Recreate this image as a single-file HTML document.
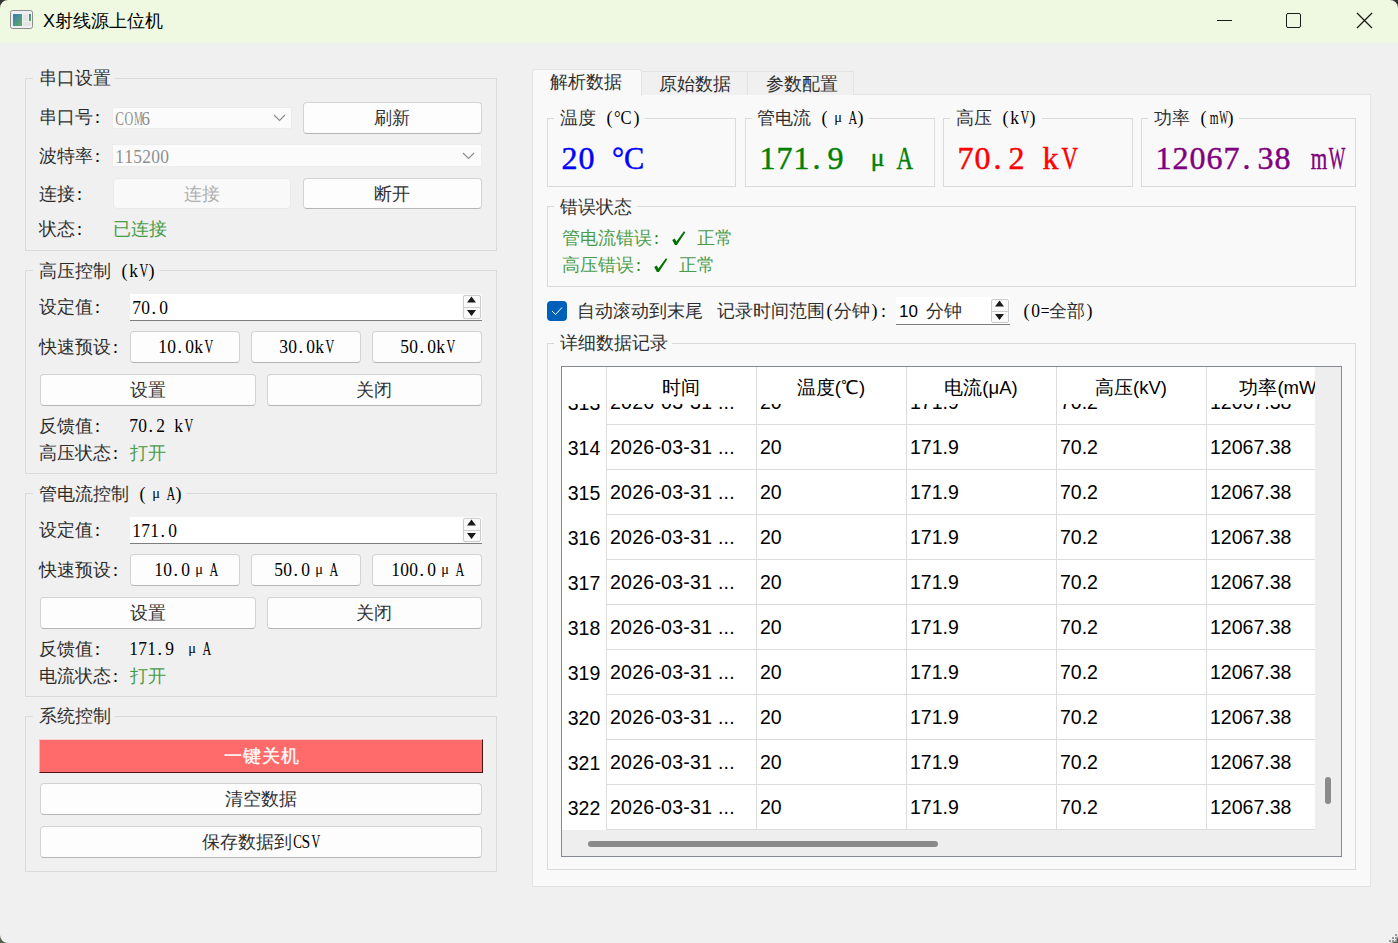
<!DOCTYPE html><html><head><meta charset="utf-8"><style>
*{margin:0;padding:0}
html,body{width:1398px;height:943px;overflow:hidden;background:#f0f0f0;position:relative}
.abs{position:absolute}
.s{font-family:"Liberation Serif",serif;font-size:18px;line-height:18px;color:#000;white-space:nowrap}
.s i{display:inline-block;text-align:center;font-style:normal}
.s i.c{opacity:.82}
.w i.c{opacity:1}
.u{font-family:"Liberation Sans",sans-serif;font-size:19.5px;line-height:20px;color:#000;white-space:nowrap}
.btn{box-sizing:border-box;border:1px solid #d3d3d3;border-bottom-color:#b5b5b5;border-radius:4px;background:#fdfdfd}
.g{color:#1f8a1f}
</style></head><body>
<div class="abs" style="left:0px;top:0px;width:1398px;height:43px;background:#eff8e0;"></div>
<svg class="abs" style="left:10px;top:10px" width="23" height="19" viewBox="0 0 23 19"><rect x="0.5" y="0.5" width="22" height="18" rx="2" fill="#eef0f4" stroke="#8c8c8c"/><defs><linearGradient id="ig" x1="0" y1="0" x2="1" y2="1"><stop offset="0" stop-color="#3b79b8"/><stop offset="1" stop-color="#5fb05a"/></linearGradient></defs><rect x="3" y="4" width="9" height="12" fill="url(#ig)"/><rect x="19" y="4" width="2" height="7" fill="url(#ig)"/><rect x="13" y="4" width="5" height="7" fill="#e4e4e4"/><rect x="13" y="12" width="8" height="4" fill="#e4e4e4"/></svg>
<div class="abs u" style="left:43px;top:12px;font-size:18px;line-height:18px">X射线源上位机</div>
<div class="abs" style="left:1217px;top:20px;width:15px;height:1px;background:#1a1a1a;"></div>
<div class="abs" style="left:1286px;top:13px;width:15px;height:15px;border:1.3px solid #1a1a1a;border-radius:2px;box-sizing:border-box;"></div>
<svg class="abs" style="left:1356px;top:12px" width="17" height="17"><path d="M1 1L16 16M16 1L1 16" stroke="#1a1a1a" stroke-width="1.3"/></svg>
<svg class="abs" style="left:0;top:0" width="8" height="8"><path d="M0 0H8A8 8 0 0 0 0 8Z" fill="#333"/></svg>
<svg class="abs" style="left:1390px;top:0" width="8" height="8"><path d="M8 0H0A8 8 0 0 1 8 8Z" fill="#333"/></svg>
<svg class="abs" style="left:0;top:935px" width="8" height="8"><path d="M0 8H8A8 8 0 0 1 0 0Z" fill="#566050"/></svg>
<svg class="abs" style="left:1390px;top:935px" width="8" height="8"><path d="M8 8H0A8 8 0 0 0 8 0Z" fill="#566050"/></svg>
<div class="abs" style="left:25px;top:78px;width:472px;height:173px;border:1px solid #dadada;box-sizing:border-box;"></div>
<div class="abs" style="left:33px;top:76px;width:81px;height:5px;background:#f0f0f0;"></div>
<div class="abs s" style="left:39px;top:69px;"><i class="c" style="width:18px">串</i><i class="c" style="width:18px">口</i><i class="c" style="width:18px">设</i><i class="c" style="width:18px">置</i></div>
<div class="abs s" style="left:39px;top:108px;"><i class="c" style="width:18px">串</i><i class="c" style="width:18px">口</i><i class="c" style="width:18px">号</i><i style="width:9.0px">:</i></div>
<div class="abs" style="left:112px;top:107px;width:180px;height:22px;background:#fbfbfb;border:1px solid #ececec;box-sizing:border-box;"></div>
<div class="abs s" style="left:114px;top:110px;color:#8f8f8f"><i style="width:9.0px"><b style="display:inline-block;font-weight:inherit;width:9.0px;transform:scaleX(0.727)">C</b></i><i style="width:9.0px"><b style="display:inline-block;font-weight:inherit;width:9.0px;transform:scaleX(0.672)">O</b></i><i style="width:9.0px"><b style="display:inline-block;font-weight:inherit;width:9.0px;transform:scaleX(0.545)">M</b></i><i style="width:9.0px"><b style="display:inline-block;font-weight:inherit;width:9.0px;transform:scaleX(0.970)">6</b></i></div>
<svg class="abs" style="left:273px;top:114px" width="13" height="8"><path d="M1 1L6.5 6.5L12 1" fill="none" stroke="#8a8a8a" stroke-width="1.1"/></svg>
<div class="abs btn" style="left:303px;top:102px;width:179px;height:32px;"></div>
<div class="abs s" style="left:374px;top:109px;"><i class="c" style="width:18px">刷</i><i class="c" style="width:18px">新</i></div>
<div class="abs s" style="left:39px;top:147px;"><i class="c" style="width:18px">波</i><i class="c" style="width:18px">特</i><i class="c" style="width:18px">率</i><i style="width:9.0px">:</i></div>
<div class="abs" style="left:112px;top:144px;width:370px;height:23px;background:#fbfbfb;border:1px solid #ececec;box-sizing:border-box;"></div>
<div class="abs s" style="left:115px;top:148px;color:#8f8f8f"><i style="width:9.0px"><b style="display:inline-block;font-weight:inherit;width:9.0px;transform:scaleX(0.970)">1</b></i><i style="width:9.0px"><b style="display:inline-block;font-weight:inherit;width:9.0px;transform:scaleX(0.970)">1</b></i><i style="width:9.0px"><b style="display:inline-block;font-weight:inherit;width:9.0px;transform:scaleX(0.970)">5</b></i><i style="width:9.0px"><b style="display:inline-block;font-weight:inherit;width:9.0px;transform:scaleX(0.970)">2</b></i><i style="width:9.0px"><b style="display:inline-block;font-weight:inherit;width:9.0px;transform:scaleX(0.970)">0</b></i><i style="width:9.0px"><b style="display:inline-block;font-weight:inherit;width:9.0px;transform:scaleX(0.970)">0</b></i></div>
<svg class="abs" style="left:462px;top:152px" width="13" height="8"><path d="M1 1L6.5 6.5L12 1" fill="none" stroke="#8a8a8a" stroke-width="1.1"/></svg>
<div class="abs s" style="left:39px;top:185px;"><i class="c" style="width:18px">连</i><i class="c" style="width:18px">接</i><i style="width:9.0px">:</i></div>
<div class="abs btn" style="left:113px;top:178px;width:178px;height:31px;background:#f9f9f9;border-color:#eaeaea;color:#a0a0a0;"></div>
<div class="abs s" style="left:184px;top:185px;color:#a0a0a0"><i class="c" style="width:18px">连</i><i class="c" style="width:18px">接</i></div>
<div class="abs btn" style="left:303px;top:178px;width:179px;height:31px;"></div>
<div class="abs s" style="left:374px;top:185px;"><i class="c" style="width:18px">断</i><i class="c" style="width:18px">开</i></div>
<div class="abs s" style="left:39px;top:220px;"><i class="c" style="width:18px">状</i><i class="c" style="width:18px">态</i><i style="width:9.0px">:</i></div>
<div class="abs s g" style="left:113px;top:220px;"><i class="c" style="width:18px">已</i><i class="c" style="width:18px">连</i><i class="c" style="width:18px">接</i></div>
<div class="abs" style="left:25px;top:270px;width:472px;height:204px;border:1px solid #dadada;box-sizing:border-box;"></div>
<div class="abs" style="left:33px;top:268px;width:126px;height:5px;background:#f0f0f0;"></div>
<div class="abs s" style="left:39px;top:262px;"><i class="c" style="width:18px">高</i><i class="c" style="width:18px">压</i><i class="c" style="width:18px">控</i><i class="c" style="width:18px">制</i><i style="width:9.0px"></i><i style="width:9.0px">(</i><i style="width:9.0px"><b style="display:inline-block;font-weight:inherit;width:9.0px;transform:scaleX(0.970)">k</b></i><i style="width:9.0px"><b style="display:inline-block;font-weight:inherit;width:9.0px;transform:scaleX(0.672)">V</b></i><i style="width:9.0px">)</i></div>
<div class="abs s" style="left:39px;top:298px;"><i class="c" style="width:18px">设</i><i class="c" style="width:18px">定</i><i class="c" style="width:18px">值</i><i style="width:9.0px">:</i></div>
<div class="abs" style="left:130px;top:294px;width:352px;height:27px;background:#fff;border-bottom:1px solid #7d7d7d;box-sizing:border-box;"></div>
<div class="abs" style="left:462px;top:294px;width:20px;height:26px;background:#f9f9f9;"></div>
<div class="abs" style="left:463px;top:295px;width:18px;height:24px;border:1px solid #cdcdcd;border-radius:2px;box-sizing:border-box;background:#fafafa;"></div>
<div class="abs" style="left:463px;top:307px;width:18px;height:1px;background:#cdcdcd;"></div>
<svg class="abs" style="left:466px;top:296px" width="11" height="20"><path d="M1 6.5L5.5 0.5L10 6.5Z M1 14L5.5 20L10 14Z" fill="#1a1a1a"/></svg>
<div class="abs s" style="left:132px;top:299px;"><i style="width:9.0px"><b style="display:inline-block;font-weight:inherit;width:9.0px;transform:scaleX(0.970)">7</b></i><i style="width:9.0px"><b style="display:inline-block;font-weight:inherit;width:9.0px;transform:scaleX(0.970)">0</b></i><i style="width:9.0px;text-align:left;text-indent:1.4px">.</i><i style="width:9.0px"><b style="display:inline-block;font-weight:inherit;width:9.0px;transform:scaleX(0.970)">0</b></i></div>
<div class="abs s" style="left:39px;top:338px;"><i class="c" style="width:18px">快</i><i class="c" style="width:18px">速</i><i class="c" style="width:18px">预</i><i class="c" style="width:18px">设</i><i style="width:9.0px">:</i></div>
<div class="abs btn" style="left:130px;top:331px;width:110px;height:32px;"></div>
<div class="abs s" style="left:158px;top:338px;"><i style="width:9.0px"><b style="display:inline-block;font-weight:inherit;width:9.0px;transform:scaleX(0.970)">1</b></i><i style="width:9.0px"><b style="display:inline-block;font-weight:inherit;width:9.0px;transform:scaleX(0.970)">0</b></i><i style="width:9.0px;text-align:left;text-indent:1.4px">.</i><i style="width:9.0px"><b style="display:inline-block;font-weight:inherit;width:9.0px;transform:scaleX(0.970)">0</b></i><i style="width:9.0px"><b style="display:inline-block;font-weight:inherit;width:9.0px;transform:scaleX(0.970)">k</b></i><i style="width:9.0px"><b style="display:inline-block;font-weight:inherit;width:9.0px;transform:scaleX(0.672)">V</b></i></div>
<div class="abs btn" style="left:251px;top:331px;width:110px;height:32px;"></div>
<div class="abs s" style="left:279px;top:338px;"><i style="width:9.0px"><b style="display:inline-block;font-weight:inherit;width:9.0px;transform:scaleX(0.970)">3</b></i><i style="width:9.0px"><b style="display:inline-block;font-weight:inherit;width:9.0px;transform:scaleX(0.970)">0</b></i><i style="width:9.0px;text-align:left;text-indent:1.4px">.</i><i style="width:9.0px"><b style="display:inline-block;font-weight:inherit;width:9.0px;transform:scaleX(0.970)">0</b></i><i style="width:9.0px"><b style="display:inline-block;font-weight:inherit;width:9.0px;transform:scaleX(0.970)">k</b></i><i style="width:9.0px"><b style="display:inline-block;font-weight:inherit;width:9.0px;transform:scaleX(0.672)">V</b></i></div>
<div class="abs btn" style="left:372px;top:331px;width:110px;height:32px;"></div>
<div class="abs s" style="left:400px;top:338px;"><i style="width:9.0px"><b style="display:inline-block;font-weight:inherit;width:9.0px;transform:scaleX(0.970)">5</b></i><i style="width:9.0px"><b style="display:inline-block;font-weight:inherit;width:9.0px;transform:scaleX(0.970)">0</b></i><i style="width:9.0px;text-align:left;text-indent:1.4px">.</i><i style="width:9.0px"><b style="display:inline-block;font-weight:inherit;width:9.0px;transform:scaleX(0.970)">0</b></i><i style="width:9.0px"><b style="display:inline-block;font-weight:inherit;width:9.0px;transform:scaleX(0.970)">k</b></i><i style="width:9.0px"><b style="display:inline-block;font-weight:inherit;width:9.0px;transform:scaleX(0.672)">V</b></i></div>
<div class="abs btn" style="left:40px;top:374px;width:216px;height:32px;"></div>
<div class="abs s" style="left:130px;top:381px;"><i class="c" style="width:18px">设</i><i class="c" style="width:18px">置</i></div>
<div class="abs btn" style="left:267px;top:374px;width:215px;height:32px;"></div>
<div class="abs s" style="left:356px;top:381px;"><i class="c" style="width:18px">关</i><i class="c" style="width:18px">闭</i></div>
<div class="abs s" style="left:39px;top:417px;"><i class="c" style="width:18px">反</i><i class="c" style="width:18px">馈</i><i class="c" style="width:18px">值</i><i style="width:9.0px">:</i></div>
<div class="abs s" style="left:129px;top:417px;"><i style="width:9.0px"><b style="display:inline-block;font-weight:inherit;width:9.0px;transform:scaleX(0.970)">7</b></i><i style="width:9.0px"><b style="display:inline-block;font-weight:inherit;width:9.0px;transform:scaleX(0.970)">0</b></i><i style="width:9.0px;text-align:left;text-indent:1.4px">.</i><i style="width:9.0px"><b style="display:inline-block;font-weight:inherit;width:9.0px;transform:scaleX(0.970)">2</b></i><i style="width:9.0px"></i><i style="width:9.0px"><b style="display:inline-block;font-weight:inherit;width:9.0px;transform:scaleX(0.970)">k</b></i><i style="width:9.0px"><b style="display:inline-block;font-weight:inherit;width:9.0px;transform:scaleX(0.672)">V</b></i></div>
<div class="abs s" style="left:39px;top:444px;"><i class="c" style="width:18px">高</i><i class="c" style="width:18px">压</i><i class="c" style="width:18px">状</i><i class="c" style="width:18px">态</i><i style="width:9.0px">:</i></div>
<div class="abs s g" style="left:130px;top:444px;"><i class="c" style="width:18px">打</i><i class="c" style="width:18px">开</i></div>
<div class="abs" style="left:25px;top:493px;width:472px;height:204px;border:1px solid #dadada;box-sizing:border-box;"></div>
<div class="abs" style="left:33px;top:491px;width:153px;height:5px;background:#f0f0f0;"></div>
<div class="abs s" style="left:39px;top:485px;"><i class="c" style="width:18px">管</i><i class="c" style="width:18px">电</i><i class="c" style="width:18px">流</i><i class="c" style="width:18px">控</i><i class="c" style="width:18px">制</i><i style="width:9.0px"></i><i style="width:9.0px">(</i><i style="width:18px"><b style="display:inline-block;font-weight:normal;font-size:0.8em;transform:translateY(-0.12em)">μ</b></i><i style="width:9.0px"><b style="display:inline-block;font-weight:inherit;width:9.0px;transform:scaleX(0.672)">A</b></i><i style="width:9.0px">)</i></div>
<div class="abs s" style="left:39px;top:521px;"><i class="c" style="width:18px">设</i><i class="c" style="width:18px">定</i><i class="c" style="width:18px">值</i><i style="width:9.0px">:</i></div>
<div class="abs" style="left:130px;top:517px;width:352px;height:27px;background:#fff;border-bottom:1px solid #7d7d7d;box-sizing:border-box;"></div>
<div class="abs" style="left:462px;top:517px;width:20px;height:26px;background:#f9f9f9;"></div>
<div class="abs" style="left:463px;top:518px;width:18px;height:24px;border:1px solid #cdcdcd;border-radius:2px;box-sizing:border-box;background:#fafafa;"></div>
<div class="abs" style="left:463px;top:530px;width:18px;height:1px;background:#cdcdcd;"></div>
<svg class="abs" style="left:466px;top:519px" width="11" height="20"><path d="M1 6.5L5.5 0.5L10 6.5Z M1 14L5.5 20L10 14Z" fill="#1a1a1a"/></svg>
<div class="abs s" style="left:132px;top:522px;"><i style="width:9.0px"><b style="display:inline-block;font-weight:inherit;width:9.0px;transform:scaleX(0.970)">1</b></i><i style="width:9.0px"><b style="display:inline-block;font-weight:inherit;width:9.0px;transform:scaleX(0.970)">7</b></i><i style="width:9.0px"><b style="display:inline-block;font-weight:inherit;width:9.0px;transform:scaleX(0.970)">1</b></i><i style="width:9.0px;text-align:left;text-indent:1.4px">.</i><i style="width:9.0px"><b style="display:inline-block;font-weight:inherit;width:9.0px;transform:scaleX(0.970)">0</b></i></div>
<div class="abs s" style="left:39px;top:561px;"><i class="c" style="width:18px">快</i><i class="c" style="width:18px">速</i><i class="c" style="width:18px">预</i><i class="c" style="width:18px">设</i><i style="width:9.0px">:</i></div>
<div class="abs btn" style="left:130px;top:554px;width:110px;height:32px;"></div>
<div class="abs s" style="left:154px;top:561px;"><i style="width:9.0px"><b style="display:inline-block;font-weight:inherit;width:9.0px;transform:scaleX(0.970)">1</b></i><i style="width:9.0px"><b style="display:inline-block;font-weight:inherit;width:9.0px;transform:scaleX(0.970)">0</b></i><i style="width:9.0px;text-align:left;text-indent:1.4px">.</i><i style="width:9.0px"><b style="display:inline-block;font-weight:inherit;width:9.0px;transform:scaleX(0.970)">0</b></i><i style="width:18px"><b style="display:inline-block;font-weight:normal;font-size:0.8em;transform:translateY(-0.12em)">μ</b></i><i style="width:9.0px"><b style="display:inline-block;font-weight:inherit;width:9.0px;transform:scaleX(0.672)">A</b></i></div>
<div class="abs btn" style="left:251px;top:554px;width:110px;height:32px;"></div>
<div class="abs s" style="left:274px;top:561px;"><i style="width:9.0px"><b style="display:inline-block;font-weight:inherit;width:9.0px;transform:scaleX(0.970)">5</b></i><i style="width:9.0px"><b style="display:inline-block;font-weight:inherit;width:9.0px;transform:scaleX(0.970)">0</b></i><i style="width:9.0px;text-align:left;text-indent:1.4px">.</i><i style="width:9.0px"><b style="display:inline-block;font-weight:inherit;width:9.0px;transform:scaleX(0.970)">0</b></i><i style="width:18px"><b style="display:inline-block;font-weight:normal;font-size:0.8em;transform:translateY(-0.12em)">μ</b></i><i style="width:9.0px"><b style="display:inline-block;font-weight:inherit;width:9.0px;transform:scaleX(0.672)">A</b></i></div>
<div class="abs btn" style="left:372px;top:554px;width:110px;height:32px;"></div>
<div class="abs s" style="left:391px;top:561px;"><i style="width:9.0px"><b style="display:inline-block;font-weight:inherit;width:9.0px;transform:scaleX(0.970)">1</b></i><i style="width:9.0px"><b style="display:inline-block;font-weight:inherit;width:9.0px;transform:scaleX(0.970)">0</b></i><i style="width:9.0px"><b style="display:inline-block;font-weight:inherit;width:9.0px;transform:scaleX(0.970)">0</b></i><i style="width:9.0px;text-align:left;text-indent:1.4px">.</i><i style="width:9.0px"><b style="display:inline-block;font-weight:inherit;width:9.0px;transform:scaleX(0.970)">0</b></i><i style="width:18px"><b style="display:inline-block;font-weight:normal;font-size:0.8em;transform:translateY(-0.12em)">μ</b></i><i style="width:9.0px"><b style="display:inline-block;font-weight:inherit;width:9.0px;transform:scaleX(0.672)">A</b></i></div>
<div class="abs btn" style="left:40px;top:597px;width:216px;height:32px;"></div>
<div class="abs s" style="left:130px;top:604px;"><i class="c" style="width:18px">设</i><i class="c" style="width:18px">置</i></div>
<div class="abs btn" style="left:267px;top:597px;width:215px;height:32px;"></div>
<div class="abs s" style="left:356px;top:604px;"><i class="c" style="width:18px">关</i><i class="c" style="width:18px">闭</i></div>
<div class="abs s" style="left:39px;top:640px;"><i class="c" style="width:18px">反</i><i class="c" style="width:18px">馈</i><i class="c" style="width:18px">值</i><i style="width:9.0px">:</i></div>
<div class="abs s" style="left:129px;top:640px;"><i style="width:9.0px"><b style="display:inline-block;font-weight:inherit;width:9.0px;transform:scaleX(0.970)">1</b></i><i style="width:9.0px"><b style="display:inline-block;font-weight:inherit;width:9.0px;transform:scaleX(0.970)">7</b></i><i style="width:9.0px"><b style="display:inline-block;font-weight:inherit;width:9.0px;transform:scaleX(0.970)">1</b></i><i style="width:9.0px;text-align:left;text-indent:1.4px">.</i><i style="width:9.0px"><b style="display:inline-block;font-weight:inherit;width:9.0px;transform:scaleX(0.970)">9</b></i><i style="width:9.0px"></i><i style="width:18px"><b style="display:inline-block;font-weight:normal;font-size:0.8em;transform:translateY(-0.12em)">μ</b></i><i style="width:9.0px"><b style="display:inline-block;font-weight:inherit;width:9.0px;transform:scaleX(0.672)">A</b></i></div>
<div class="abs s" style="left:39px;top:667px;"><i class="c" style="width:18px">电</i><i class="c" style="width:18px">流</i><i class="c" style="width:18px">状</i><i class="c" style="width:18px">态</i><i style="width:9.0px">:</i></div>
<div class="abs s g" style="left:130px;top:667px;"><i class="c" style="width:18px">打</i><i class="c" style="width:18px">开</i></div>
<div class="abs" style="left:25px;top:716px;width:472px;height:156px;border:1px solid #dadada;box-sizing:border-box;"></div>
<div class="abs" style="left:33px;top:714px;width:81px;height:5px;background:#f0f0f0;"></div>
<div class="abs s" style="left:39px;top:707px;"><i class="c" style="width:18px">系</i><i class="c" style="width:18px">统</i><i class="c" style="width:18px">控</i><i class="c" style="width:18px">制</i></div>
<div class="abs" style="left:39px;top:739px;width:444px;height:34px;box-sizing:border-box;background:#ff6b6b;border-top:1px solid #ffd0d0;border-left:1px solid #ffb0b0;border-right:1px solid #4a1515;border-bottom:1px solid #4a1515"></div>
<div class="abs s w" style="left:223px;top:747px;color:#fff;-webkit-text-stroke:0.3px #fff"><i class="c" style="width:19px">一</i><i class="c" style="width:19px">键</i><i class="c" style="width:19px">关</i><i class="c" style="width:19px">机</i></div>
<div class="abs btn" style="left:40px;top:783px;width:442px;height:32px;"></div>
<div class="abs s" style="left:225px;top:790px;"><i class="c" style="width:18px">清</i><i class="c" style="width:18px">空</i><i class="c" style="width:18px">数</i><i class="c" style="width:18px">据</i></div>
<div class="abs btn" style="left:40px;top:826px;width:442px;height:32px;"></div>
<div class="abs s" style="left:202px;top:833px;"><i class="c" style="width:18px">保</i><i class="c" style="width:18px">存</i><i class="c" style="width:18px">数</i><i class="c" style="width:18px">据</i><i class="c" style="width:18px">到</i><i style="width:9.0px"><b style="display:inline-block;font-weight:inherit;width:9.0px;transform:scaleX(0.727)">C</b></i><i style="width:9.0px"><b style="display:inline-block;font-weight:inherit;width:9.0px;transform:scaleX(0.872)">S</b></i><i style="width:9.0px"><b style="display:inline-block;font-weight:inherit;width:9.0px;transform:scaleX(0.672)">V</b></i></div>
<div class="abs" style="left:532px;top:94px;width:839px;height:793px;background:#f9f9f9;border:1px solid #e3e3e3;box-sizing:border-box;"></div>
<div class="abs" style="left:641px;top:71px;width:107px;height:24px;background:#f0f0f0;border:1px solid #e3e3e3;border-bottom:none;box-sizing:border-box;"></div>
<div class="abs" style="left:747px;top:71px;width:107px;height:24px;background:#f0f0f0;border:1px solid #e3e3e3;border-bottom:none;box-sizing:border-box;"></div>
<div class="abs" style="left:532px;top:69px;width:110px;height:27px;background:#f9f9f9;border:1px solid #e3e3e3;border-bottom:none;box-sizing:border-box;border-radius:3px 3px 0 0;"></div>
<div class="abs s" style="left:550px;top:73px;"><i class="c" style="width:18px">解</i><i class="c" style="width:18px">析</i><i class="c" style="width:18px">数</i><i class="c" style="width:18px">据</i></div>
<div class="abs s" style="left:659px;top:75px;"><i class="c" style="width:18px">原</i><i class="c" style="width:18px">始</i><i class="c" style="width:18px">数</i><i class="c" style="width:18px">据</i></div>
<div class="abs s" style="left:766px;top:75px;"><i class="c" style="width:18px">参</i><i class="c" style="width:18px">数</i><i class="c" style="width:18px">配</i><i class="c" style="width:18px">置</i></div>
<div class="abs" style="left:547px;top:118px;width:189px;height:69px;border:1px solid #dadada;box-sizing:border-box;"></div>
<div class="abs" style="left:554px;top:116px;width:91px;height:5px;background:#f9f9f9;"></div>
<div class="abs s" style="left:560px;top:109px;"><i class="c" style="width:18px">温</i><i class="c" style="width:18px">度</i><i style="width:9.0px"></i><i style="width:9.0px">(</i><i style="width:18px;text-align:left"><b style="display:inline-block;font-weight:inherit;transform:scaleX(0.919);transform-origin:0 0;white-space:nowrap">°C</b></i><i style="width:9.0px">)</i></div>
<div class="abs s" style="left:561px;top:142px;color:#0000ff;font-size:32px;line-height:32px;-webkit-text-stroke:0.45px #0000ff"><i style="width:17.0px">2</i><i style="width:17.0px">0</i><i style="width:17.0px"></i><i style="width:33px;text-align:left"><b style="display:inline-block;font-weight:inherit;transform:scaleX(0.947);transform-origin:0 0;white-space:nowrap">°C</b></i></div>
<div class="abs" style="left:745px;top:118px;width:190px;height:69px;border:1px solid #dadada;box-sizing:border-box;"></div>
<div class="abs" style="left:752px;top:116px;width:117px;height:5px;background:#f9f9f9;"></div>
<div class="abs s" style="left:757px;top:109px;"><i class="c" style="width:18px">管</i><i class="c" style="width:18px">电</i><i class="c" style="width:18px">流</i><i style="width:9.0px"></i><i style="width:9.0px">(</i><i style="width:18px"><b style="display:inline-block;font-weight:normal;font-size:0.8em;transform:translateY(-0.12em)">μ</b></i><i style="width:9.0px"><b style="display:inline-block;font-weight:inherit;width:9.0px;transform:scaleX(0.672)">A</b></i><i style="width:9.0px">)</i></div>
<div class="abs s" style="left:759px;top:142px;color:#008000;font-size:32px;line-height:32px;-webkit-text-stroke:0.45px #008000"><i style="width:17.0px">1</i><i style="width:17.0px">7</i><i style="width:17.0px">1</i><i style="width:17.0px;text-align:left;text-indent:2.6px">.</i><i style="width:17.0px">9</i><i style="width:17.0px"></i><i style="width:33px"><b style="display:inline-block;font-weight:normal;font-size:0.8em;transform:translateY(-0.12em)">μ</b></i><i style="width:17.0px"><b style="display:inline-block;font-weight:inherit;width:17.0px;transform:scaleX(0.714)">A</b></i></div>
<div class="abs" style="left:943px;top:118px;width:190px;height:69px;border:1px solid #dadada;box-sizing:border-box;"></div>
<div class="abs" style="left:950px;top:116px;width:92px;height:5px;background:#f9f9f9;"></div>
<div class="abs s" style="left:956px;top:109px;"><i class="c" style="width:18px">高</i><i class="c" style="width:18px">压</i><i style="width:9.0px"></i><i style="width:9.0px">(</i><i style="width:9.0px"><b style="display:inline-block;font-weight:inherit;width:9.0px;transform:scaleX(0.970)">k</b></i><i style="width:9.0px"><b style="display:inline-block;font-weight:inherit;width:9.0px;transform:scaleX(0.672)">V</b></i><i style="width:9.0px">)</i></div>
<div class="abs s" style="left:957px;top:142px;color:#ff0000;font-size:32px;line-height:32px;-webkit-text-stroke:0.45px #ff0000"><i style="width:17.0px">7</i><i style="width:17.0px">0</i><i style="width:17.0px;text-align:left;text-indent:2.6px">.</i><i style="width:17.0px">2</i><i style="width:17.0px"></i><i style="width:17.0px">k</i><i style="width:17.0px"><b style="display:inline-block;font-weight:inherit;width:17.0px;transform:scaleX(0.714)">V</b></i></div>
<div class="abs" style="left:1141px;top:118px;width:215px;height:69px;border:1px solid #dadada;box-sizing:border-box;"></div>
<div class="abs" style="left:1148px;top:116px;width:91px;height:5px;background:#f9f9f9;"></div>
<div class="abs s" style="left:1154px;top:109px;"><i class="c" style="width:18px">功</i><i class="c" style="width:18px">率</i><i style="width:9.0px"></i><i style="width:9.0px">(</i><i style="width:9.0px"><b style="display:inline-block;font-weight:inherit;width:9.0px;transform:scaleX(0.624)">m</b></i><i style="width:9.0px"><b style="display:inline-block;font-weight:inherit;width:9.0px;transform:scaleX(0.514)">W</b></i><i style="width:9.0px">)</i></div>
<div class="abs s" style="left:1155px;top:142px;color:#800080;font-size:32px;line-height:32px;-webkit-text-stroke:0.45px #800080"><i style="width:17.0px">1</i><i style="width:17.0px">2</i><i style="width:17.0px">0</i><i style="width:17.0px">6</i><i style="width:17.0px">7</i><i style="width:17.0px;text-align:left;text-indent:2.6px">.</i><i style="width:17.0px">3</i><i style="width:17.0px">8</i><i style="width:17.0px"></i><i style="width:17.0px"><b style="display:inline-block;font-weight:inherit;width:17.0px;transform:scaleX(0.662)">m</b></i><i style="width:17.0px"><b style="display:inline-block;font-weight:inherit;width:17.0px;transform:scaleX(0.546)">W</b></i></div>
<div class="abs" style="left:547px;top:206px;width:809px;height:81px;border:1px solid #dadada;box-sizing:border-box;"></div>
<div class="abs" style="left:554px;top:204px;width:83px;height:5px;background:#f9f9f9;"></div>
<div class="abs s" style="left:560px;top:198px;"><i class="c" style="width:18px">错</i><i class="c" style="width:18px">误</i><i class="c" style="width:18px">状</i><i class="c" style="width:18px">态</i></div>
<div class="abs s g" style="left:562px;top:229px;"><i class="c" style="width:18px">管</i><i class="c" style="width:18px">电</i><i class="c" style="width:18px">流</i><i class="c" style="width:18px">错</i><i class="c" style="width:18px">误</i><i style="width:9.0px">:</i><i style="width:9.0px"></i><i style='width:18px'><svg width=14 height=15 style=vertical-align:-2px;margin-left:-1px><path d=M0.2,9L2.7,7.6L4.4,10.6L11.9,0.2L13.3,1.2L4.9,14L2.9,14Z fill=#007000 /></svg></i><i style="width:9.0px"></i><i class="c" style="width:18px">正</i><i class="c" style="width:18px">常</i></div>
<div class="abs s g" style="left:562px;top:256px;"><i class="c" style="width:18px">高</i><i class="c" style="width:18px">压</i><i class="c" style="width:18px">错</i><i class="c" style="width:18px">误</i><i style="width:9.0px">:</i><i style="width:9.0px"></i><i style='width:18px'><svg width=14 height=15 style=vertical-align:-2px;margin-left:-1px><path d=M0.2,9L2.7,7.6L4.4,10.6L11.9,0.2L13.3,1.2L4.9,14L2.9,14Z fill=#007000 /></svg></i><i style="width:9.0px"></i><i class="c" style="width:18px">正</i><i class="c" style="width:18px">常</i></div>
<div class="abs" style="left:547px;top:301px;width:20px;height:20px;background:#005fb8;border-radius:4px;"></div>
<svg class="abs" style="left:551px;top:306px" width="12" height="10"><path d="M1 5L4.5 8.5L11 1.5" fill="none" stroke="#fff" stroke-width="1"/></svg>
<div class="abs s" style="left:577px;top:302px;"><i class="c" style="width:18px">自</i><i class="c" style="width:18px">动</i><i class="c" style="width:18px">滚</i><i class="c" style="width:18px">动</i><i class="c" style="width:18px">到</i><i class="c" style="width:18px">末</i><i class="c" style="width:18px">尾</i></div>
<div class="abs s" style="left:717px;top:302px;"><i class="c" style="width:18px">记</i><i class="c" style="width:18px">录</i><i class="c" style="width:18px">时</i><i class="c" style="width:18px">间</i><i class="c" style="width:18px">范</i><i class="c" style="width:18px">围</i><i style="width:9.0px">(</i><i class="c" style="width:18px">分</i><i class="c" style="width:18px">钟</i><i style="width:9.0px">)</i><i style="width:9.0px">:</i></div>
<div class="abs" style="left:896px;top:297px;width:114px;height:28px;background:#fff;border-bottom:1px solid #7d7d7d;box-sizing:border-box;"></div>
<div class="abs" style="left:991px;top:299px;width:18px;height:24px;border:1px solid #cdcdcd;border-radius:2px;box-sizing:border-box;background:#fafafa;"></div>
<div class="abs" style="left:991px;top:311px;width:18px;height:1px;background:#cdcdcd;"></div>
<svg class="abs" style="left:994px;top:300px" width="11" height="20"><path d="M1 6.5L5.5 0.5L10 6.5Z M1 14L5.5 20L10 14Z" fill="#1a1a1a"/></svg>
<div class="abs u" style="left:899px;top:303px;font-size:17px;line-height:17px">10</div>
<div class="abs s" style="left:926px;top:302px;"><i class="c" style="width:18px">分</i><i class="c" style="width:18px">钟</i></div>
<div class="abs s" style="left:1022px;top:302px;"><i style="width:9.0px">(</i><i style="width:9.0px"><b style="display:inline-block;font-weight:inherit;width:9.0px;transform:scaleX(0.970)">0</b></i><i style="width:9.0px"><b style="display:inline-block;font-weight:inherit;width:9.0px;transform:scaleX(0.860)">=</b></i><i class="c" style="width:18px">全</i><i class="c" style="width:18px">部</i><i style="width:9.0px">)</i></div>
<div class="abs" style="left:547px;top:343px;width:809px;height:527px;border:1px solid #dadada;box-sizing:border-box;"></div>
<div class="abs" style="left:554px;top:341px;width:118px;height:5px;background:#f9f9f9;"></div>
<div class="abs s" style="left:560px;top:334px;"><i class="c" style="width:18px">详</i><i class="c" style="width:18px">细</i><i class="c" style="width:18px">数</i><i class="c" style="width:18px">据</i><i class="c" style="width:18px">记</i><i class="c" style="width:18px">录</i></div>
<div class="abs" style="left:561px;top:366px;width:781px;height:491px;background:#fff;border:1px solid #858a90;box-sizing:border-box;"></div>
<div class="abs" style="left:1315px;top:367px;width:26px;height:489px;background:#eeeeee;"></div>
<div class="abs" style="left:562px;top:830px;width:779px;height:26px;background:#eeeeee;"></div>
<div class="abs" style="left:1325px;top:777px;width:6px;height:27px;background:#8a8a8a;border-radius:3px;"></div>
<div class="abs" style="left:588px;top:841px;width:350px;height:6px;background:#8a8a8a;border-radius:3px;"></div>
<div class="abs" style="left:562px;top:404px;width:753px;height:426px;overflow:hidden">
<div class="abs" style="left:44px;top:20.0px;width:709px;height:1px;background:#dcdcdc"></div>
<div class="abs u" style="left:0;width:44px;text-align:center;top:-11.0px">313</div>
<div class="abs u" style="left:48px;top:-12.0px;letter-spacing:0.25px;">2026-03-31 ...</div>
<div class="abs u" style="left:198px;top:-12.0px;">20</div>
<div class="abs u" style="left:348px;top:-12.0px;">171.9</div>
<div class="abs u" style="left:498px;top:-12.0px;">70.2</div>
<div class="abs u" style="left:648px;top:-12.0px;">12067.38</div>
<div class="abs" style="left:44px;top:65.0px;width:709px;height:1px;background:#dcdcdc"></div>
<div class="abs u" style="left:0;width:44px;text-align:center;top:34.0px">314</div>
<div class="abs u" style="left:48px;top:33.0px;letter-spacing:0.25px;">2026-03-31 ...</div>
<div class="abs u" style="left:198px;top:33.0px;">20</div>
<div class="abs u" style="left:348px;top:33.0px;">171.9</div>
<div class="abs u" style="left:498px;top:33.0px;">70.2</div>
<div class="abs u" style="left:648px;top:33.0px;">12067.38</div>
<div class="abs" style="left:44px;top:110.0px;width:709px;height:1px;background:#dcdcdc"></div>
<div class="abs u" style="left:0;width:44px;text-align:center;top:79.0px">315</div>
<div class="abs u" style="left:48px;top:78.0px;letter-spacing:0.25px;">2026-03-31 ...</div>
<div class="abs u" style="left:198px;top:78.0px;">20</div>
<div class="abs u" style="left:348px;top:78.0px;">171.9</div>
<div class="abs u" style="left:498px;top:78.0px;">70.2</div>
<div class="abs u" style="left:648px;top:78.0px;">12067.38</div>
<div class="abs" style="left:44px;top:155.0px;width:709px;height:1px;background:#dcdcdc"></div>
<div class="abs u" style="left:0;width:44px;text-align:center;top:124.0px">316</div>
<div class="abs u" style="left:48px;top:123.0px;letter-spacing:0.25px;">2026-03-31 ...</div>
<div class="abs u" style="left:198px;top:123.0px;">20</div>
<div class="abs u" style="left:348px;top:123.0px;">171.9</div>
<div class="abs u" style="left:498px;top:123.0px;">70.2</div>
<div class="abs u" style="left:648px;top:123.0px;">12067.38</div>
<div class="abs" style="left:44px;top:200.0px;width:709px;height:1px;background:#dcdcdc"></div>
<div class="abs u" style="left:0;width:44px;text-align:center;top:169.0px">317</div>
<div class="abs u" style="left:48px;top:168.0px;letter-spacing:0.25px;">2026-03-31 ...</div>
<div class="abs u" style="left:198px;top:168.0px;">20</div>
<div class="abs u" style="left:348px;top:168.0px;">171.9</div>
<div class="abs u" style="left:498px;top:168.0px;">70.2</div>
<div class="abs u" style="left:648px;top:168.0px;">12067.38</div>
<div class="abs" style="left:44px;top:245.0px;width:709px;height:1px;background:#dcdcdc"></div>
<div class="abs u" style="left:0;width:44px;text-align:center;top:214.0px">318</div>
<div class="abs u" style="left:48px;top:213.0px;letter-spacing:0.25px;">2026-03-31 ...</div>
<div class="abs u" style="left:198px;top:213.0px;">20</div>
<div class="abs u" style="left:348px;top:213.0px;">171.9</div>
<div class="abs u" style="left:498px;top:213.0px;">70.2</div>
<div class="abs u" style="left:648px;top:213.0px;">12067.38</div>
<div class="abs" style="left:44px;top:290.0px;width:709px;height:1px;background:#dcdcdc"></div>
<div class="abs u" style="left:0;width:44px;text-align:center;top:259.0px">319</div>
<div class="abs u" style="left:48px;top:258.0px;letter-spacing:0.25px;">2026-03-31 ...</div>
<div class="abs u" style="left:198px;top:258.0px;">20</div>
<div class="abs u" style="left:348px;top:258.0px;">171.9</div>
<div class="abs u" style="left:498px;top:258.0px;">70.2</div>
<div class="abs u" style="left:648px;top:258.0px;">12067.38</div>
<div class="abs" style="left:44px;top:335.0px;width:709px;height:1px;background:#dcdcdc"></div>
<div class="abs u" style="left:0;width:44px;text-align:center;top:304.0px">320</div>
<div class="abs u" style="left:48px;top:303.0px;letter-spacing:0.25px;">2026-03-31 ...</div>
<div class="abs u" style="left:198px;top:303.0px;">20</div>
<div class="abs u" style="left:348px;top:303.0px;">171.9</div>
<div class="abs u" style="left:498px;top:303.0px;">70.2</div>
<div class="abs u" style="left:648px;top:303.0px;">12067.38</div>
<div class="abs" style="left:44px;top:380.0px;width:709px;height:1px;background:#dcdcdc"></div>
<div class="abs u" style="left:0;width:44px;text-align:center;top:349.0px">321</div>
<div class="abs u" style="left:48px;top:348.0px;letter-spacing:0.25px;">2026-03-31 ...</div>
<div class="abs u" style="left:198px;top:348.0px;">20</div>
<div class="abs u" style="left:348px;top:348.0px;">171.9</div>
<div class="abs u" style="left:498px;top:348.0px;">70.2</div>
<div class="abs u" style="left:648px;top:348.0px;">12067.38</div>
<div class="abs" style="left:44px;top:425.0px;width:709px;height:1px;background:#dcdcdc"></div>
<div class="abs u" style="left:0;width:44px;text-align:center;top:394.0px">322</div>
<div class="abs u" style="left:48px;top:393.0px;letter-spacing:0.25px;">2026-03-31 ...</div>
<div class="abs u" style="left:198px;top:393.0px;">20</div>
<div class="abs u" style="left:348px;top:393.0px;">171.9</div>
<div class="abs u" style="left:498px;top:393.0px;">70.2</div>
<div class="abs u" style="left:648px;top:393.0px;">12067.38</div>
<div class="abs" style="left:44px;top:0;width:1px;height:427px;background:#dcdcdc"></div>
<div class="abs" style="left:194px;top:0;width:1px;height:427px;background:#dcdcdc"></div>
<div class="abs" style="left:344px;top:0;width:1px;height:427px;background:#dcdcdc"></div>
<div class="abs" style="left:494px;top:0;width:1px;height:427px;background:#dcdcdc"></div>
<div class="abs" style="left:644px;top:0;width:1px;height:427px;background:#dcdcdc"></div>
</div>
<div class="abs" style="left:562px;top:367px;width:753px;height:37px;background:#fff;"></div>
<div class="abs" style="left:606px;top:367px;width:1px;height:37px;background:#dcdcdc;"></div>
<div class="abs" style="left:756px;top:367px;width:1px;height:37px;background:#dcdcdc;"></div>
<div class="abs" style="left:906px;top:367px;width:1px;height:37px;background:#dcdcdc;"></div>
<div class="abs" style="left:1056px;top:367px;width:1px;height:37px;background:#dcdcdc;"></div>
<div class="abs" style="left:1206px;top:367px;width:1px;height:37px;background:#dcdcdc;"></div>
<div class="abs" style="left:562px;top:367px;width:753px;height:37px;overflow:hidden">
<div class="abs u" style="left:44px;width:150px;text-align:center;top:12px;font-size:18.5px;line-height:18.5px">时间</div>
<div class="abs u" style="left:194px;width:150px;text-align:center;top:12px;font-size:18.5px;line-height:18.5px">温度(℃)</div>
<div class="abs u" style="left:344px;width:150px;text-align:center;top:12px;font-size:18.5px;line-height:18.5px">电流(μA)</div>
<div class="abs u" style="left:494px;width:150px;text-align:center;top:12px;font-size:18.5px;line-height:18.5px">高压(kV)</div>
<div class="abs u" style="left:644px;width:150px;text-align:center;top:12px;font-size:18.5px;line-height:18.5px">功率(mW)</div>
</div>
<svg class="abs" style="left:1386px;top:931px" width="12" height="12"><g fill="#9a9a9a"><rect x="9" y="3" width="2" height="2"/><rect x="6" y="6" width="2" height="2"/><rect x="9" y="6" width="2" height="2"/><rect x="3" y="9" width="2" height="2"/><rect x="6" y="9" width="2" height="2"/><rect x="9" y="9" width="2" height="2"/></g></svg>
</body></html>
